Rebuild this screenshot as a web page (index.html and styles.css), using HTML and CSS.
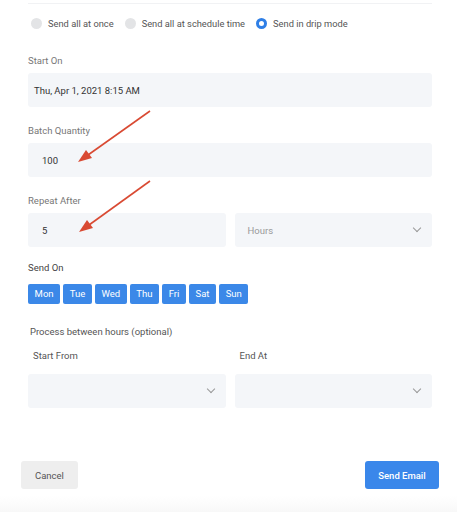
FILE: index.html
```html
<!DOCTYPE html>
<html lang="en">
<head>
    <meta charset="UTF-8">
    <meta name="viewport" content="width=device-width, initial-scale=1.0">
    <title>Send Email - Drip Mode</title>
    <link rel="stylesheet" href="styles.css">
</head>
<body>
    <div id="dialog">
        <div id="content">
            <div class="divider"></div>
            <div class="radios">
                <label class="radio"><span class="dot"></span>Send all at once</label>
                <label class="radio"><span class="dot"></span>Send all at schedule time</label>
                <label class="radio checked"><span class="dot"></span>Send in drip mode</label>
            </div>

            <div class="field first">
                <div class="label">Start On</div>
                <div class="box">Thu, Apr 1, 2021 8:15 AM</div>
            </div>

            <div class="field">
                <div class="label">Batch Quantity</div>
                <div class="box indent">100</div>
            </div>

            <div class="field">
                <div class="label">Repeat After</div>
                <div class="pair">
                    <div class="box indent">5</div>
                    <div class="box select muted">Hours <span class="chevron"></span></div>
                </div>
            </div>

            <div class="field days-field">
                <div class="label dark">Send On</div>
                <div class="days">
                    <span class="day">Mon</span>
                    <span class="day">Tue</span>
                    <span class="day">Wed</span>
                    <span class="day">Thu</span>
                    <span class="day">Fri</span>
                    <span class="day">Sat</span>
                    <span class="day">Sun</span>
                </div>
            </div>

            <div class="hours">
                <div class="hours-title">Process between hours (optional)</div>
                <div class="pair">
                    <div>
                        <div class="sublabel">Start From</div>
                        <div class="box select"><span class="chevron"></span></div>
                    </div>
                    <div>
                        <div class="sublabel">End At</div>
                        <div class="box select"><span class="chevron"></span></div>
                    </div>
                </div>
            </div>
        </div>

        <div id="footer">
            <button class="btn cancel">Cancel</button>
            <button class="btn primary">Send Email</button>
        </div>
        <div class="shade"></div>

        <svg class="arrows" width="457" height="512" viewBox="0 0 457 512">
            <line x1="150" y1="111" x2="88" y2="155" stroke="#d94a33" stroke-width="1.6"/>
            <polygon points="78,162 86,150 92,158" fill="#d94a33"/>
            <line x1="150" y1="181" x2="89" y2="225" stroke="#d94a33" stroke-width="1.6"/>
            <polygon points="79,232 87,220 93,228" fill="#d94a33"/>
        </svg>
    </div>
</body>
</html>
```

FILE: styles.css
```css
body {
    margin: 0;
    background: #fff;
    font-family: Roboto, "Liberation Sans", Arial, sans-serif;
    color: #444;
}
#dialog {
    position: relative;
    width: 457px;
    height: 512px;
    overflow: hidden;
}
#content {
    padding: 0 25px 0 28px;
}
.divider {
    margin-top: 3px;
    height: 1px;
    background: #f1f2f4;
}
.radios {
    display: flex;
    align-items: center;
    gap: 11px;
    margin-top: 11px;
    padding-left: 3px;
    height: 16px;
    font-size: 9.3px;
    color: #555;
}
.radio {
    display: flex;
    align-items: center;
    gap: 6px;
}
.dot {
    width: 11px;
    height: 11px;
    border-radius: 50%;
    background: #e3e4e6;
    box-sizing: border-box;
}
.radio.checked .dot {
    background: #fff;
    border: 3.5px solid #2f7fe6;
}
.field {
    margin-top: 18px;
}
.field.first {
    margin-top: 24px;
}
.field.days-field {
    margin-top: 15px;
}
.label {
    font-size: 9.5px;
    color: #777;
    line-height: 12px;
    margin-bottom: 6px;
}
.label.dark {
    color: #444;
    margin-bottom: 10px;
}
.box {
    height: 34px;
    background: #f4f6f9;
    border-radius: 3px;
    display: flex;
    align-items: center;
    padding: 0 6px;
    font-size: 9.5px;
    color: #333;
}
.box.indent {
    padding-left: 14px;
}
.pair {
    display: grid;
    grid-template-columns: 1fr 1fr;
    gap: 9px;
}
.select {
    justify-content: space-between;
    padding: 0 12px 0 13px;
}
.muted {
    color: #999;
}
.select .chevron {
    margin-left: auto;
    width: 5px;
    height: 5px;
    border-right: 1px solid #999;
    border-bottom: 1px solid #999;
    transform: rotate(45deg);
    margin-top: -4px;
}
.days {
    display: flex;
    gap: 3px;
}
.day {
    background: #3b88e8;
    color: #fff;
    font-size: 9.5px;
    height: 20px;
    line-height: 20px;
    padding: 0 6.6px;
    border-radius: 2px;
}
.hours {
    margin-top: 22px;
}
.hours-title {
    font-size: 9.5px;
    color: #555;
    padding-left: 2px;
    line-height: 12px;
}
.sublabel {
    font-size: 9.5px;
    color: #555;
    padding-left: 5px;
    margin-top: 12px;
    margin-bottom: 12px;
    line-height: 12px;
}
#footer {
    display: flex;
    justify-content: space-between;
    padding: 0 18px 0 21px;
    margin-top: 53px;
}
.btn {
    height: 28px;
    border: none;
    border-radius: 3px;
    font-family: Roboto, "Liberation Sans", Arial, sans-serif;
    font-size: 9.5px;
    padding: 0 14px;
}
.cancel {
    background: #eeeeee;
    color: #555;
}
.primary {
    background: #3a87ea;
    color: #fff;
    font-weight: 500;
    padding: 0 12px;
    width: 74px;
}
.shade {
    position: absolute;
    left: 0;
    right: 0;
    bottom: 0;
    height: 16px;
    background: linear-gradient(to bottom, #fff, #f8f8f8);
}
.arrows {
    position: absolute;
    left: 0;
    top: 0;
    pointer-events: none;
}
```
